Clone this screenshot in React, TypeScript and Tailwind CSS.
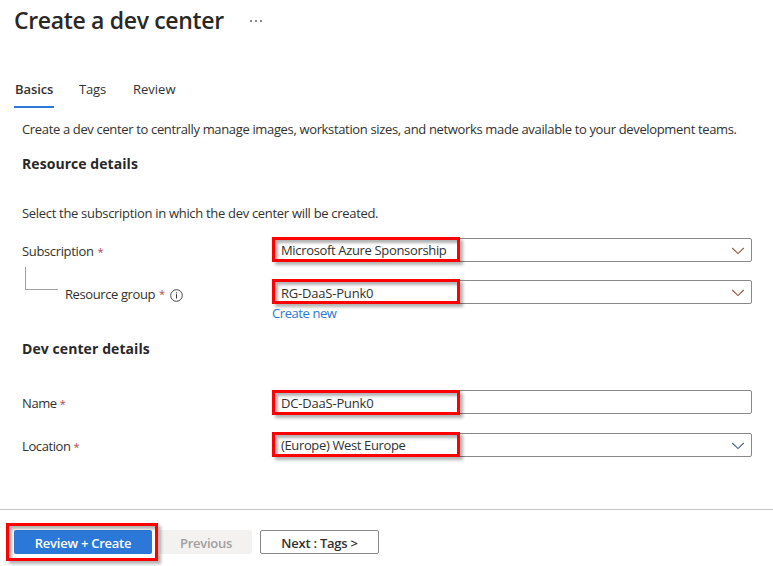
import type { ReactNode } from "react";

function Highlight({ children, className }: { children?: ReactNode; className: string }) {
  return (
    <div
      className={`absolute z-10 border-3 border-[#fe0000] shadow-[3px_3px_3px_rgba(0,0,0,0.3),inset_3px_3px_3px_rgba(0,0,0,0.3)] ${className}`}
    >
      {children}
    </div>
  );
}

function Chevron({ className }: { className: string }) {
  return (
    <svg className={`mt-[2px] ${className}`} width="14" height="8" viewBox="0 0 14 8" fill="none" stroke="currentColor" strokeWidth="1.1">
      <path d="M1.2 1 L7 6.6 L12.8 1" />
    </svg>
  );
}

function Field({ value, chevron, frame, text }: { value: string; chevron?: string; frame: string; text: string }) {
  return (
    <div className="relative h-6 w-[480px]">
      <div className="flex h-6 items-center justify-between rounded-[2px] border border-[#8a8886] bg-white pr-[6px] pl-2">
        <span className={`whitespace-nowrap ${text}`}>{value}</span>
        {chevron && <Chevron className={chevron} />}
      </div>
      <Highlight className={`left-0 h-[25px] w-[188px] ${frame}`} />
    </div>
  );
}

function Required({ className = "ml-1" }: { className?: string }) {
  return <span className={`text-[11px] text-[#b3474c] ${className}`}>*</span>;
}

export default function App() {
  return (
    <main className="h-[566px] w-[773px] overflow-hidden bg-white font-['Open_Sans','Noto_Sans',sans-serif] text-[13px] leading-[18px] text-[#323130]">
      <header className="flex h-[42px] items-center pl-[14px]">
        <h1 className="w-[210px] pb-[2px] text-[23px] leading-8 font-semibold tracking-[-0.33px] whitespace-nowrap text-[#292827]">Create a dev center</h1>
        <div className="ml-[26px] flex gap-[3px]">
          <i className="size-[2px] bg-[#8a8886]" />
          <i className="size-[2px] bg-[#8a8886]" />
          <i className="size-[2px] bg-[#8a8886]" />
        </div>
      </header>

      <nav className="mt-[38px] flex h-7 pl-[14px]">
        <div className="w-10 border-b-2 border-[#2b78d8] pl-px font-semibold tracking-[-0.1px]">Basics</div>
        <div className="ml-[25px] w-[54px] tracking-[-0.15px]">Tags</div>
        <div>Review</div>
      </nav>

      <section className="pl-[22px]">
        <p className="mt-[12px] tracking-[-0.348px] whitespace-nowrap">
          Create a dev center to centrally manage images, workstation sizes, and networks made available to your development teams.
        </p>
        <h2 className="mt-[17px] text-[14px] font-bold tracking-[0.06px] text-[#292827]">Resource details</h2>
        <p className="mt-[31px] tracking-[-0.31px]">Select the subscription in which the dev center will be created.</p>

        <div className="mt-4 flex">
          <div className="w-[250px] pt-1 tracking-[-0.35px]">
            Subscription
            <Required />
          </div>
          <Field value="Microsoft Azure Sponsorship" chevron="text-[#8f5c3c]" frame="-top-px" text="tracking-[-0.34px]" />
        </div>
        <div className="mt-[18px] flex">
          <div className="flex w-[250px]">
            <div className="-mt-[13px] ml-[3px] h-[23px] w-[33px] border-b border-l border-[#a19f9d]" />
            <div className="ml-[7px] flex pt-[5px] tracking-[-0.4px]">
              Resource group
              <Required />
              <svg className="mt-[4px] ml-[5px]" width="13" height="13" viewBox="0 0 13 13" fill="none" stroke="#323130">
                <circle cx="6.5" cy="6.5" r="5.8" strokeWidth="0.9" />
                <path d="M6.5 5.2 V9.5 M6.5 3.2 V4.3" />
              </svg>
            </div>
          </div>
          <Field value="RG-DaaS-Punk0" chevron="text-[#8f5c3c]" frame="-top-px" text="tracking-[-0.2px] pt-px" />
        </div>
        <a className="ml-[250px] block tracking-[-0.42px] text-[#2b78d8]">Create new</a>

        <h2 className="mt-[18px] text-[14px] font-bold tracking-[0.08px] text-[#292827]">Dev center details</h2>
        <div className="mt-8 flex">
          <div className="w-[250px] pt-1 tracking-[-0.4px]">
            Name
            <Required className="ml-[3px]" />
          </div>
          <Field value="DC-DaaS-Punk0" frame="top-0" text="tracking-[-0.2px] pt-[2px]" />
        </div>
        <div className="mt-[19px] flex">
          <div className="w-[250px] pt-1 tracking-[-0.4px]">
            Location
            <Required className="ml-[3px]" />
          </div>
          <Field value="(Europe) West Europe" chevron="text-[#48658f]" frame="-top-px" text="tracking-[-0.36px]" />
        </div>
      </section>

      <footer className="mt-[52px] flex border-t border-[#c8c6c4] pt-5 pl-[14px] text-[13px] font-semibold tracking-[-0.25px]">
        <div className="relative h-6 w-[138px]">
          <button className="h-6 w-full rounded-[2px] bg-[#2b78d8] pt-px text-white">Review + Create</button>
          <Highlight className="-top-[7px] -left-2 h-[38px] w-[152px]" />
        </div>
        <button className="ml-2 h-6 w-[92px] rounded-[2px] bg-[#f3f2f1] pt-px text-[#a19f9d]">Previous</button>
        <button className="ml-2 h-6 w-[119px] rounded-[2px] border border-[#8a8886] pt-px leading-5">Next : Tags &gt;</button>
      </footer>
    </main>
  );
}
